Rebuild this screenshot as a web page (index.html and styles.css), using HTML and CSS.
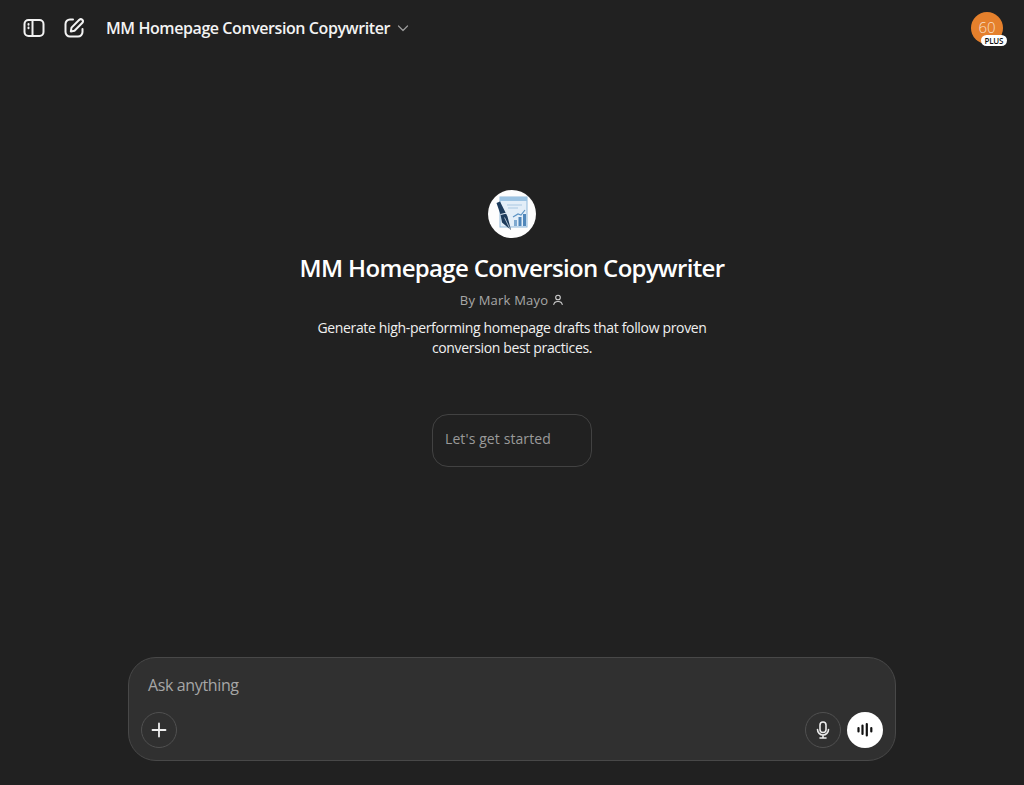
FILE: index.html
```html
<!DOCTYPE html>
<html lang="en">
<head>
    <meta charset="UTF-8">
    <meta name="viewport" content="width=device-width, initial-scale=1.0">
    <title>MM Homepage Conversion Copywriter</title>
    <link rel="stylesheet" href="styles.css">
</head>
<body>
    <header class="topbar">
        <div class="topbar-left">
            <svg class="top-icon" viewBox="0 0 24 24" fill="none" stroke="#f3f3f3" stroke-width="2">
                <rect x="2.5" y="4" width="19" height="16" rx="4"/>
                <path d="M10.500 4v16"/>
                <path d="M6.500 8v.8M6.500 11.500v.8" stroke-linecap="round"/>
            </svg>
            <svg class="top-icon" viewBox="0 0 24 24" fill="none" stroke="#f3f3f3" stroke-width="2" stroke-linecap="round" stroke-linejoin="round">
                <path d="M11 3.5H8a4.5 4.5 0 0 0-4.5 4.500V16A4.500 4.500 0 0 0 8 20.500h8a4.500 4.500 0 0 0 4.500-4.500v-3"/>
                <path d="M17.300 3.700a2.200 2.200 0 0 1 3.100 3.100L12.500 14.700l-3.700.7.700-3.800z"/>
            </svg>
            <div class="model-name">MM Homepage Conversion Copywriter</div>
            <svg class="chevron" viewBox="0 0 12 12" fill="none" stroke="#9b9b9b" stroke-width="1.200" stroke-linecap="round" stroke-linejoin="round">
                <path d="M1.500 4l4.500 4.500L10.500 4"/>
            </svg>
        </div>
        <div class="avatar">
            <span class="avatar-count">60</span>
            <div class="plus-badge">PLUS</div>
        </div>
    </header>

    <main class="hero">
        <svg class="gpt-logo" viewBox="0 0 48 48">
            <circle cx="24" cy="24" r="24" fill="#fdfdfd"/>
            <rect x="12" y="7" width="27" height="30" fill="#e3eef8" stroke="#8fb8da" stroke-width="1"/>
            <rect x="12" y="7" width="27" height="4" fill="#9cc3e2"/>
            <path d="M19 15h15M20 18h10" stroke="#a9c8e2" stroke-width="1"/>
            <path d="M25 27l5-3 3 1 4-5" fill="none" stroke="#5c93c4" stroke-width="1.200"/>
            <rect x="26" y="30" width="3" height="6" fill="#7fa9d0"/>
            <rect x="30.500" y="27" width="3" height="9" fill="#4f86ba"/>
            <rect x="35" y="24" width="3" height="12" fill="#4f86ba"/>
            <path d="M8.500 13l3.500-1.500 7.500 15 3.500 13.500-9-7.500-1.500-8z" fill="#1d3b5c"/>
            <path d="M12.500 24.500l6.500-1.500" stroke="#e3eef8" stroke-width="1"/>
            <path d="M16.500 27.500l5.500 11.500" stroke="#e3eef8" stroke-width=".7"/>
        </svg>
        <h1 class="gpt-title">MM Homepage Conversion Copywriter</h1>
        <div class="gpt-author">
            <span>By Mark Mayo</span>
            <svg class="person" viewBox="0 0 12 12" fill="none" stroke="#d0d0d0" stroke-width="1.100" stroke-linecap="round">
                <circle cx="6" cy="3.500" r="2.300"/>
                <path d="M1.800 10.500c.3-2 2-3 4.200-3s3.900 1 4.200 3"/>
            </svg>
        </div>
        <p class="gpt-desc">Generate high-performing homepage drafts that follow proven conversion best practices.</p>
        <div class="starter">Let's get started</div>
    </main>

    <footer class="composer-wrap">
        <div class="composer">
            <div class="composer-input">Ask anything</div>
            <div class="composer-actions">
                <button class="round-btn">
                    <svg viewBox="0 0 20 20" width="20" height="20" fill="none" stroke="#f0f0f0" stroke-width="1.800" stroke-linecap="round">
                        <path d="M10 3.500v13M3.500 10h13"/>
                    </svg>
                </button>
                <div class="actions-right">
                    <button class="round-btn">
                        <svg viewBox="0 0 20 20" width="20" height="20" fill="none" stroke="#ececec" stroke-width="1.600" stroke-linecap="round">
                            <rect x="7" y="2" width="6" height="10.500" rx="3"/>
                            <path d="M4.500 9.500a5.500 5.500 0 0 0 11 0M10 15v3M7 18h6"/>
                        </svg>
                    </button>
                    <button class="round-btn voice-btn">
                        <svg viewBox="0 0 20 20" width="20" height="20" fill="none" stroke="#111" stroke-width="2.200" stroke-linecap="round">
                            <path d="M3.500 8v3.500M7.500 5.500v8.500M11.800 4v11.500M16.300 8v3.500"/>
                        </svg>
                    </button>
                </div>
            </div>
        </div>
    </footer>
</body>
</html>
```

FILE: styles.css
```css
* {
    box-sizing: border-box;
}

body {
    display: flex;
    flex-direction: column;
    height: 100vh;
    margin: 0;
    overflow: hidden;
    background-color: #212121;
    color: white;
    font-family: "Open Sans", "Noto Sans", sans-serif;
}

.topbar {
    display: flex;
    align-items: center;
    justify-content: space-between;
    height: 56px;
    padding: 0 21px 0 22px;
}

.topbar-left {
    display: flex;
    align-items: center;
}

.top-icon {
    width: 24px;
    height: 24px;
    margin-right: 16px;
}

.model-name {
    margin-left: 4px;
    font-size: 16px;
    font-weight: 600;
    letter-spacing: -0.42px;
    color: #f3f3f3;
}

.chevron {
    width: 12px;
    height: 12px;
    margin-left: 7px;
}

.avatar {
    position: relative;
    display: flex;
    justify-content: center;
    width: 32px;
    height: 32px;
    border-radius: 50%;
    background-color: #e5802c;
}

.avatar-count {
    font-size: 15px;
    font-weight: 300;
    line-height: 30px;
    color: #f8dfc8;
}

.plus-badge {
    position: absolute;
    right: -4px;
    bottom: -2px;
    padding: 0 4px;
    border-radius: 7px;
    background-color: white;
    color: #111;
    font-size: 8px;
    font-weight: 600;
    line-height: 11px;
    letter-spacing: -0.3px;
}

.hero {
    display: flex;
    flex: 1;
    flex-direction: column;
    align-items: center;
    padding-top: 134px;
}

.gpt-logo {
    width: 48px;
    height: 48px;
}

.gpt-title {
    margin: 14px 0 0;
    font-size: 24px;
    font-weight: 600;
    line-height: 31px;
    letter-spacing: -0.66px;
    color: #fff;
}

.gpt-author {
    display: flex;
    align-items: center;
    gap: 4px;
    margin-top: 7px;
    font-size: 13px;
    line-height: 20px;
    letter-spacing: 0.2px;
    color: #a8a8a8;
}

.person {
    width: 12px;
    height: 12px;
}

.gpt-desc {
    width: 420px;
    margin: 8px 0 0;
    font-size: 14px;
    line-height: 20px;
    letter-spacing: -0.34px;
    text-align: center;
    color: #f0f0f0;
}

.starter {
    width: 160px;
    height: 53px;
    margin-top: 56px;
    padding: 0 12px;
    border: 1px solid #424242;
    border-radius: 16px;
    font-size: 14px;
    line-height: 48px;
    letter-spacing: 0.1px;
    color: #9a9a9a;
}

.composer-wrap {
    display: flex;
    justify-content: center;
    padding-bottom: 24px;
}

.composer {
    width: 768px;
    height: 104px;
    padding: 0 12px;
    border: 1px solid #484848;
    border-radius: 28px;
    background-color: #303030;
}

.composer-input {
    padding: 15px 7px 0;
    font-size: 16px;
    line-height: 24px;
    letter-spacing: -0.37px;
    color: #a6a6a6;
}

.composer-actions {
    display: flex;
    align-items: center;
    justify-content: space-between;
    margin-top: 15px;
}

.actions-right {
    display: flex;
    gap: 6px;
}

.round-btn {
    display: flex;
    align-items: center;
    justify-content: center;
    width: 36px;
    height: 36px;
    padding: 0;
    border: 1px solid #505050;
    border-radius: 50%;
    background: transparent;
}

.voice-btn {
    border: none;
    background-color: white;
}
```
